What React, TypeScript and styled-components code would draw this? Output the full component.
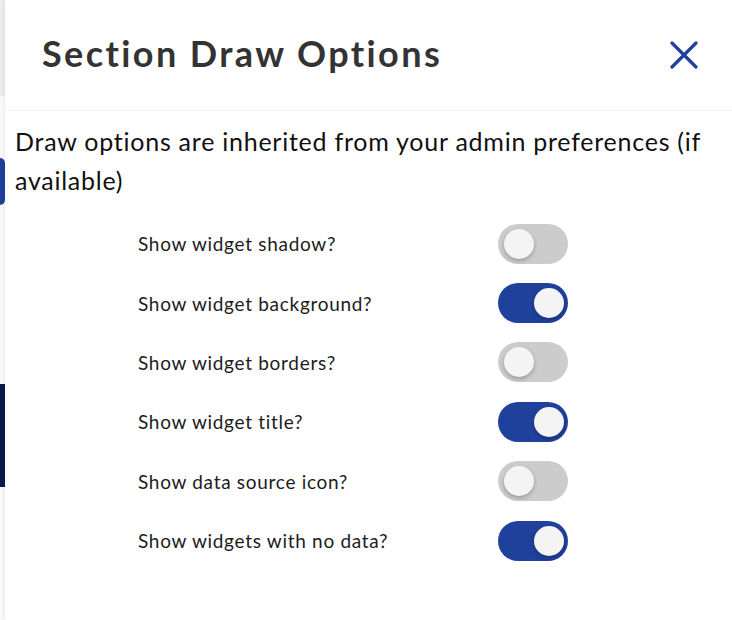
import React, { useState } from 'react'
import styled, { createGlobalStyle } from 'styled-components'

const GlobalStyle = createGlobalStyle`
  html, body {
    margin: 0;
    padding: 0;
    background: #ffffff;
    font-family: Lato, "Noto Sans", sans-serif;
  }
`

const Page = styled.div`
  display: flex;
  width: 732px;
  height: 620px;
  overflow: hidden;
  background: #f8f8f8;
`

const Behind = styled.div`
  display: flex;
  flex-direction: column;
  width: 5px;
  flex-shrink: 0;
  background: #fafafa;
`

const BehindBlock = styled.div<{ $h: number; $color: string; $round?: boolean }>`
  height: ${(p) => p.$h}px;
  flex-shrink: 0;
  background: ${(p) => p.$color};
  border-radius: ${(p) => (p.$round ? '0 6px 6px 0' : '0')};
`

const Drawer = styled.div`
  flex: 1;
  display: flex;
  flex-direction: column;
  background: #ffffff;
  box-shadow: -2px 0 4px rgba(0, 0, 0, 0.06);
`

const Header = styled.div`
  display: flex;
  align-items: center;
  justify-content: space-between;
  height: 110px;
  padding: 0 28px 0 37px;
  border-bottom: 1px solid #f0f0f0;
`

const Title = styled.h1`
  margin: 0 0 4px 0;
  font-size: 36px;
  font-weight: 700;
  color: #333333;
  letter-spacing: 2.4px;
`

const CloseButton = styled.button`
  display: flex;
  align-items: center;
  justify-content: center;
  width: 40px;
  height: 40px;
  padding: 0;
  border: none;
  background: none;
  cursor: pointer;
`

const Body = styled.div`
  padding: 11px 10px 0 10px;
`

const Intro = styled.p`
  margin: 0 0 14px 0;
  font-size: 25px;
  line-height: 39px;
  letter-spacing: 0.75px;
  color: #111111;
`

const Options = styled.div`
  display: flex;
  flex-direction: column;
  padding-left: 123px;
`

const Row = styled.div`
  display: grid;
  grid-template-columns: 360px 70px;
  align-items: center;
  height: 59.4px;
`

const Label = styled.span`
  font-size: 19px;
  letter-spacing: 0.7px;
  color: #1c1c1c;
`

const Track = styled.button<{ $on: boolean }>`
  position: relative;
  width: 70px;
  height: 40px;
  padding: 0;
  border: none;
  border-radius: 20px;
  background: ${(p) => (p.$on ? '#1f419b' : '#cccccc')};
  cursor: pointer;
`

const Knob = styled.span<{ $on: boolean }>`
  position: absolute;
  top: 5px;
  left: ${(p) => (p.$on ? '36px' : '6px')};
  width: 30px;
  height: 30px;
  border-radius: 50%;
  background: #f4f4f4;
  box-shadow: 0 2px 4px rgba(0, 0, 0, 0.25);
`

const options = [
  { label: 'Show widget shadow?', on: false },
  { label: 'Show widget background?', on: true },
  { label: 'Show widget borders?', on: false },
  { label: 'Show widget title?', on: true },
  { label: 'Show data source icon?', on: false },
  { label: 'Show widgets with no data?', on: true },
]

export default function App() {
  const [values, setValues] = useState(options.map((o) => o.on))

  const toggle = (i: number) => {
    setValues((v) => v.map((x, j) => (j === i ? !x : x)))
  }

  return (
    <Page>
      <GlobalStyle />
      <Behind>
        <BehindBlock $h={96} $color="#eceef1" />
        <BehindBlock $h={62} $color="#fbfbfb" />
        <BehindBlock $h={47} $color="#1f419b" $round />
        <BehindBlock $h={179} $color="#fbfbfb" />
        <BehindBlock $h={103} $color="#0b1a4a" />
      </Behind>
      <Drawer>
        <Header>
          <Title>Section Draw Options</Title>
          <CloseButton aria-label="Close">
            <svg width="28" height="28" viewBox="0 0 28 28">
              <path
                d="M2 2 L26 26 M26 2 L2 26"
                stroke="#1f419b"
                strokeWidth="3.2"
                strokeLinecap="round"
              />
            </svg>
          </CloseButton>
        </Header>
        <Body>
          <Intro>
            Draw options are inherited from your admin preferences (if
            available)
          </Intro>
          <Options>
            {options.map((o, i) => (
              <Row key={o.label}>
                <Label>{o.label}</Label>
                <Track $on={values[i]} onClick={() => toggle(i)}>
                  <Knob $on={values[i]} />
                </Track>
              </Row>
            ))}
          </Options>
        </Body>
      </Drawer>
    </Page>
  )
}
